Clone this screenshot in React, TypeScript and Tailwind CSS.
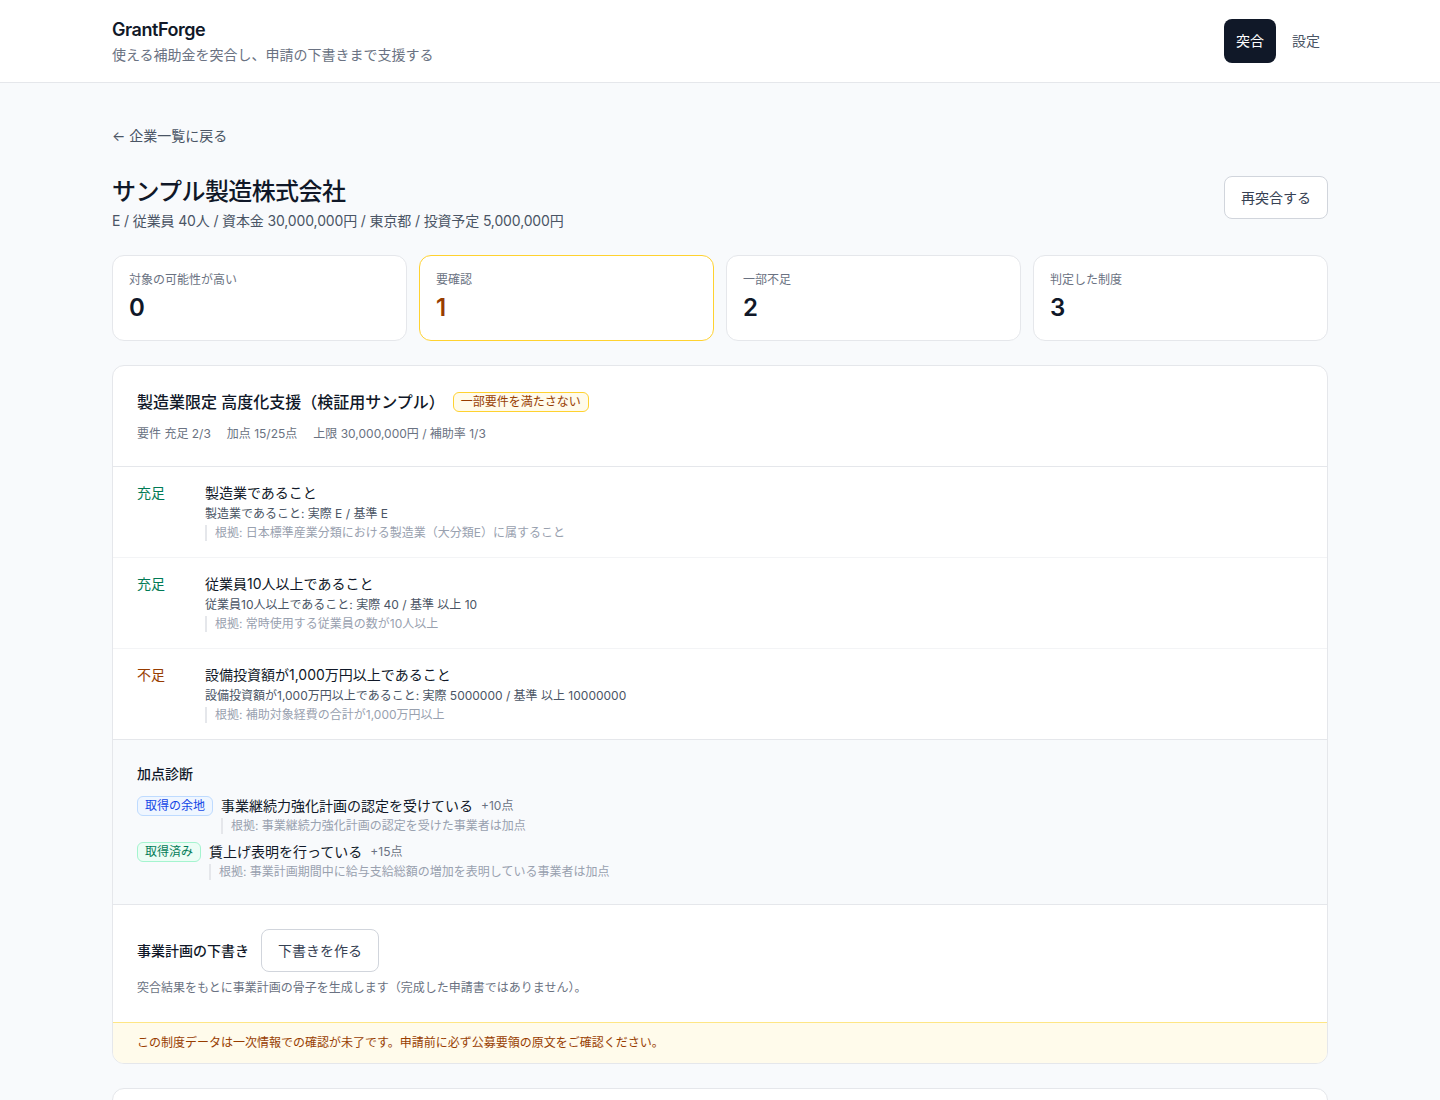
import React from "react";

const font = { fontFamily: 'Inter, "Noto Sans CJK JP", "Noto Sans", sans-serif' };

function Stat({ label, value, highlight }: { label: string; value: string; highlight?: boolean }) {
  return (
    <div
      className={
        "rounded-xl border bg-white p-4 " +
        (highlight ? "border-amber-300" : "border-gray-200")
      }
    >
      <div className="text-xs leading-4 text-gray-500">{label}</div>
      <div
        className={
          "mt-1 text-2xl leading-8 font-semibold " + (highlight ? "text-amber-800" : "text-gray-900")
        }
      >
        {value}
      </div>
    </div>
  );
}

function Req({
  ok,
  title,
  detail,
  basis,
}: {
  ok: boolean;
  title: string;
  detail: string;
  basis: string;
}) {
  return (
    <div className="flex gap-4 border-t border-gray-100 px-6 py-4 first:border-t-0">
      <div className={"w-[52px] shrink-0 text-sm leading-5 " + (ok ? "text-emerald-700" : "text-amber-800")}>
        {ok ? "充足" : "不足"}
      </div>
      <div>
        <div className="text-sm leading-5 text-gray-900">{title}</div>
        <div className="mt-px text-xs leading-5 text-gray-600">{detail}</div>
        <div className="mt-px border-l-2 border-gray-200 pl-2 text-xs leading-4 text-gray-400">{basis}</div>
      </div>
    </div>
  );
}

export default function App() {
  return (
    <div className="min-h-screen bg-[#f8fafc]" style={font}>
      <header className="h-[83px] border-b border-gray-200 bg-white">
        <div className="mx-auto flex h-full max-w-[1216px] items-center justify-between">
          <div>
            <div className="text-lg leading-6 font-semibold tracking-tight text-gray-900">GrantForge</div>
            <div className="mt-[3px] text-sm leading-5 text-gray-500">使える補助金を突合し、申請の下書きまで支援する</div>
          </div>
          <nav className="flex items-center gap-2">
            <button className="h-11 rounded-lg bg-gray-900 px-3 text-sm text-white">突合</button>
            <button className="h-11 px-2 text-sm text-gray-600">設定</button>
          </nav>
        </div>
      </header>

      <main className="mx-auto max-w-[1216px] pt-[43px] pb-10">
        <div className="text-sm leading-5 text-gray-600">← 企業一覧に戻る</div>

        <div className="mt-[30px] flex items-start justify-between">
          <div>
            <h1 className="text-2xl leading-8 font-medium tracking-tight text-gray-900">サンプル製造株式会社</h1>
            <div className="mt-[3px] text-sm leading-5 tracking-[-0.01em] text-gray-600">
              E / 従業員 40人 / 資本金 30,000,000円 / 東京都 / 投資予定 5,000,000円
            </div>
          </div>
          <button className="h-[43px] rounded-lg border border-gray-300 bg-white px-4 text-sm text-gray-700">
            再突合する
          </button>
        </div>

        <div className="mt-6 grid grid-cols-4 gap-3">
          <Stat label="対象の可能性が高い" value="0" />
          <Stat label="要確認" value="1" highlight />
          <Stat label="一部不足" value="2" />
          <Stat label="判定した制度" value="3" />
        </div>

        <section className="mt-6 overflow-hidden rounded-xl border border-gray-200 bg-white">
          <div className="border-b border-gray-200 p-6">
            <div className="flex items-center gap-2">
              <h2 className="text-base leading-6 font-medium text-gray-900">
                製造業限定 高度化支援（検証用サンプル）
              </h2>
              <span className="rounded-md border border-amber-300 bg-amber-50 px-[7px] text-xs leading-[18px] text-amber-800">
                一部要件を満たさない
              </span>
            </div>
            <div className="mt-3 flex gap-4 text-xs leading-4 text-gray-500">
              <span>要件 充足 2/3</span>
              <span>加点 15/25点</span>
              <span>上限 30,000,000円 / 補助率 1/3</span>
            </div>
          </div>

          <div>
            <Req
              ok
              title="製造業であること"
              detail="製造業であること: 実際 E / 基準 E"
              basis="根拠: 日本標準産業分類における製造業（大分類E）に属すること"
            />
            <Req
              ok
              title="従業員10人以上であること"
              detail="従業員10人以上であること: 実際 40 / 基準 以上 10"
              basis="根拠: 常時使用する従業員の数が10人以上"
            />
            <Req
              ok={false}
              title="設備投資額が1,000万円以上であること"
              detail="設備投資額が1,000万円以上であること: 実際 5000000 / 基準 以上 10000000"
              basis="根拠: 補助対象経費の合計が1,000万円以上"
            />
          </div>

          <div className="border-t border-gray-200 bg-[#f8fafc] px-6 pt-6 pb-6">
            <h3 className="text-sm leading-5 font-medium text-gray-900">加点診断</h3>
            <div className="mt-3 space-y-1">
              <div>
                <div className="flex items-center gap-2">
                  <span className="rounded-md border border-blue-200 bg-blue-50 px-[7px] text-xs leading-[18px] text-blue-700">
                    取得の余地
                  </span>
                  <span className="text-sm leading-5 text-gray-900">事業継続力強化計画の認定を受けている</span>
                  <span className="text-xs text-gray-500">+10点</span>
                </div>
                <div className="ml-[84px] mt-0.5 border-l-2 border-gray-200 pl-2 text-xs leading-4 text-gray-400">
                  根拠: 事業継続力強化計画の認定を受けた事業者は加点
                </div>
              </div>
              <div className="pt-1">
                <div className="flex items-center gap-2">
                  <span className="rounded-md border border-emerald-200 bg-emerald-50 px-[7px] text-xs leading-[18px] text-emerald-700">
                    取得済み
                  </span>
                  <span className="text-sm leading-5 text-gray-900">賃上げ表明を行っている</span>
                  <span className="text-xs text-gray-500">+15点</span>
                </div>
                <div className="ml-[72px] mt-0.5 border-l-2 border-gray-200 pl-2 text-xs leading-4 text-gray-400">
                  根拠: 事業計画期間中に給与支給総額の増加を表明している事業者は加点
                </div>
              </div>
            </div>
          </div>

          <div className="border-t border-gray-200 px-6 pt-6 pb-6">
            <div className="flex items-center gap-3">
              <h3 className="text-sm leading-5 font-medium text-gray-900">事業計画の下書き</h3>
              <button className="h-[43px] rounded-lg border border-gray-300 bg-white px-4 text-sm text-gray-700">
                下書きを作る
              </button>
            </div>
            <p className="mt-[6px] text-xs leading-5 text-gray-500">
              突合結果をもとに事業計画の骨子を生成します（完成した申請書ではありません）。
            </p>
          </div>

          <div className="border-t border-amber-200 bg-amber-50 px-6 py-3 text-xs leading-4 text-amber-800">
            この制度データは一次情報での確認が未了です。申請前に必ず公募要領の原文をご確認ください。
          </div>
        </section>

        <section className="mt-6 h-40 rounded-xl border border-gray-200 bg-white" />
      </main>
    </div>
  );
}
